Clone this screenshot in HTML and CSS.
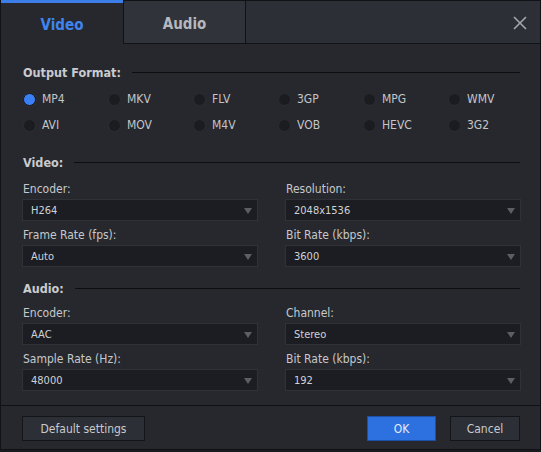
FILE: index.html
```html
<!DOCTYPE html>
<html>
<head>
<meta charset="utf-8">
<link rel="stylesheet" href="styles.css">
</head>
<body>
<div class="window">
  <div class="header">
    <div class="tab tab-active">Video</div>
    <div class="tab tab-idle">Audio</div>
    <div class="header-fill">
      <svg class="close" width="16" height="16" viewBox="0 0 16 16"><path d="M2 2 L14 14 M14 2 L2 14" stroke="#a3a7ad" stroke-width="1.6" fill="none"/></svg>
    </div>
  </div>
  <div class="main">
    <div class="heading">Output Format:</div>
    <div class="radios">
      <div class="radio"><span class="dot on"></span>MP4</div>
      <div class="radio"><span class="dot"></span>MKV</div>
      <div class="radio"><span class="dot"></span>FLV</div>
      <div class="radio"><span class="dot"></span>3GP</div>
      <div class="radio"><span class="dot"></span>MPG</div>
      <div class="radio"><span class="dot"></span>WMV</div>
      <div class="radio"><span class="dot"></span>AVI</div>
      <div class="radio"><span class="dot"></span>MOV</div>
      <div class="radio"><span class="dot"></span>M4V</div>
      <div class="radio"><span class="dot"></span>VOB</div>
      <div class="radio"><span class="dot"></span>HEVC</div>
      <div class="radio"><span class="dot"></span>3G2</div>
    </div>
    <div class="heading sec-video">Video:</div>
    <div class="fields">
      <div class="field"><div class="label">Encoder:</div><div class="select">H264<span class="arrow"></span></div></div>
      <div class="field"><div class="label">Resolution:</div><div class="select">2048x1536<span class="arrow"></span></div></div>
      <div class="field"><div class="label">Frame Rate (fps):</div><div class="select">Auto<span class="arrow"></span></div></div>
      <div class="field"><div class="label">Bit Rate (kbps):</div><div class="select">3600<span class="arrow"></span></div></div>
    </div>
    <div class="heading sec-audio">Audio:</div>
    <div class="fields">
      <div class="field"><div class="label">Encoder:</div><div class="select">AAC<span class="arrow"></span></div></div>
      <div class="field"><div class="label">Channel:</div><div class="select">Stereo<span class="arrow"></span></div></div>
      <div class="field"><div class="label">Sample Rate (Hz):</div><div class="select">48000<span class="arrow"></span></div></div>
      <div class="field"><div class="label">Bit Rate (kbps):</div><div class="select">192<span class="arrow"></span></div></div>
    </div>
  </div>
  <div class="footer">
    <div class="btn btn-default">Default settings</div>
    <div class="spacer"></div>
    <div class="btn btn-ok">OK</div>
    <div class="btn btn-cancel">Cancel</div>
  </div>
</div>
</body>
</html>
```

FILE: styles.css
```css
html, body {
  margin: 0;
  padding: 0;
  background: #1a1b1f;
}
body {
  font-family: "DejaVu Sans Condensed", "DejaVu Sans", Tahoma, sans-serif;
  font-size: 12px;
  color: #c6c8cb;
}
.window {
  box-sizing: border-box;
  width: 541px;
  height: 450px;
  border: 1px solid #111215;
  border-top: none;
  background: #26282e;
  display: flex;
  flex-direction: column;
}
.header {
  display: flex;
  height: 44px;
  flex: none;
}
.tab {
  box-sizing: border-box;
  height: 44px;
  display: flex;
  align-items: center;
  justify-content: center;
  font-weight: bold;
  font-size: 15px;
  padding-top: 3px;
}
.tab-active {
  width: 122px;
  color: #3f84ef;
  background: #26282e;
  border-top: 3px solid #3b7ee8;
  padding-top: 2px;
}
.tab-idle {
  width: 123px;
  color: #b5b8bd;
  background: #30333a;
  border: 1px solid #111215;
}
.header-fill {
  flex: 1;
  box-sizing: border-box;
  height: 44px;
  background: #2c2f36;
  border-top: 1px solid #111215;
  border-bottom: 1px solid #111215;
  display: flex;
  align-items: center;
  justify-content: flex-end;
  padding-right: 12px;
}
.close {
  display: block;
  margin-top: 2px;
}
.main {
  flex: 1;
  padding: 19px 20px 0 21px;
}
.heading {
  display: flex;
  align-items: center;
  height: 18px;
  font-weight: bold;
  font-size: 12.5px;
  color: #c9cbce;
  padding-left: 1px;
}
.heading::after {
  content: "";
  flex: 1;
  height: 1px;
  background: #0d0e10;
  margin-left: 11px;
  margin-top: 1px;
}
.radios {
  display: grid;
  grid-template-columns: repeat(6, 85px);
  grid-auto-rows: 26px;
  margin-top: 5px;
  padding-left: 1px;
}
.radio {
  display: flex;
  align-items: center;
  color: #c3c5c8;
}
.dot {
  box-sizing: border-box;
  width: 13px;
  height: 13px;
  border-radius: 50%;
  background: #1b1c20;
  border: 1px solid #2b2d32;
  margin-right: 6px;
}
.dot.on {
  background: #3b7ff4;
  border: 1px solid #16171b;
  box-shadow: 0 0 0 1px #2c2e33;
}
.sec-video {
  margin-top: 15px;
}
.sec-audio {
  margin-top: 12px;
}
.fields {
  display: grid;
  grid-template-columns: 236px 236px;
  column-gap: 27px;
  row-gap: 6px;
  margin-top: 10px;
}
.sec-audio + .fields {
  margin-top: 8px;
}
.label {
  height: 16px;
  line-height: 16px;
  margin-bottom: 2px;
  padding-left: 1px;
  color: #c6c8cb;
}
.select {
  box-sizing: border-box;
  height: 22px;
  background: #1c1d22;
  border: 1px solid #303238;
  display: flex;
  align-items: center;
  padding-left: 8px;
  font-size: 11px;
  color: #d0d2d5;
  position: relative;
}
.arrow {
  position: absolute;
  right: 5px;
  top: 8px;
  width: 0;
  height: 0;
  border-left: 4px solid transparent;
  border-right: 4px solid transparent;
  border-top: 6px solid #5a5e66;
}
.footer {
  flex: none;
  height: 44px;
  box-sizing: border-box;
  border-top: 1px solid #0f1012;
  display: flex;
  align-items: flex-start;
  padding: 10px 20px 0 21px;
}
.spacer {
  flex: 1;
}
.btn {
  box-sizing: border-box;
  height: 25px;
  display: flex;
  align-items: center;
  justify-content: center;
  font-size: 12px;
  color: #c8cacd;
  background: #2c2f36;
  border: 1px solid #141518;
}
.btn-default {
  width: 123px;
}
.btn-ok {
  width: 69px;
  background: #2d70e0;
  border: 1px solid #1d4fa8;
  color: #e6ecf5;
}
.btn-cancel {
  width: 70px;
  margin-left: 14px;
}
```
